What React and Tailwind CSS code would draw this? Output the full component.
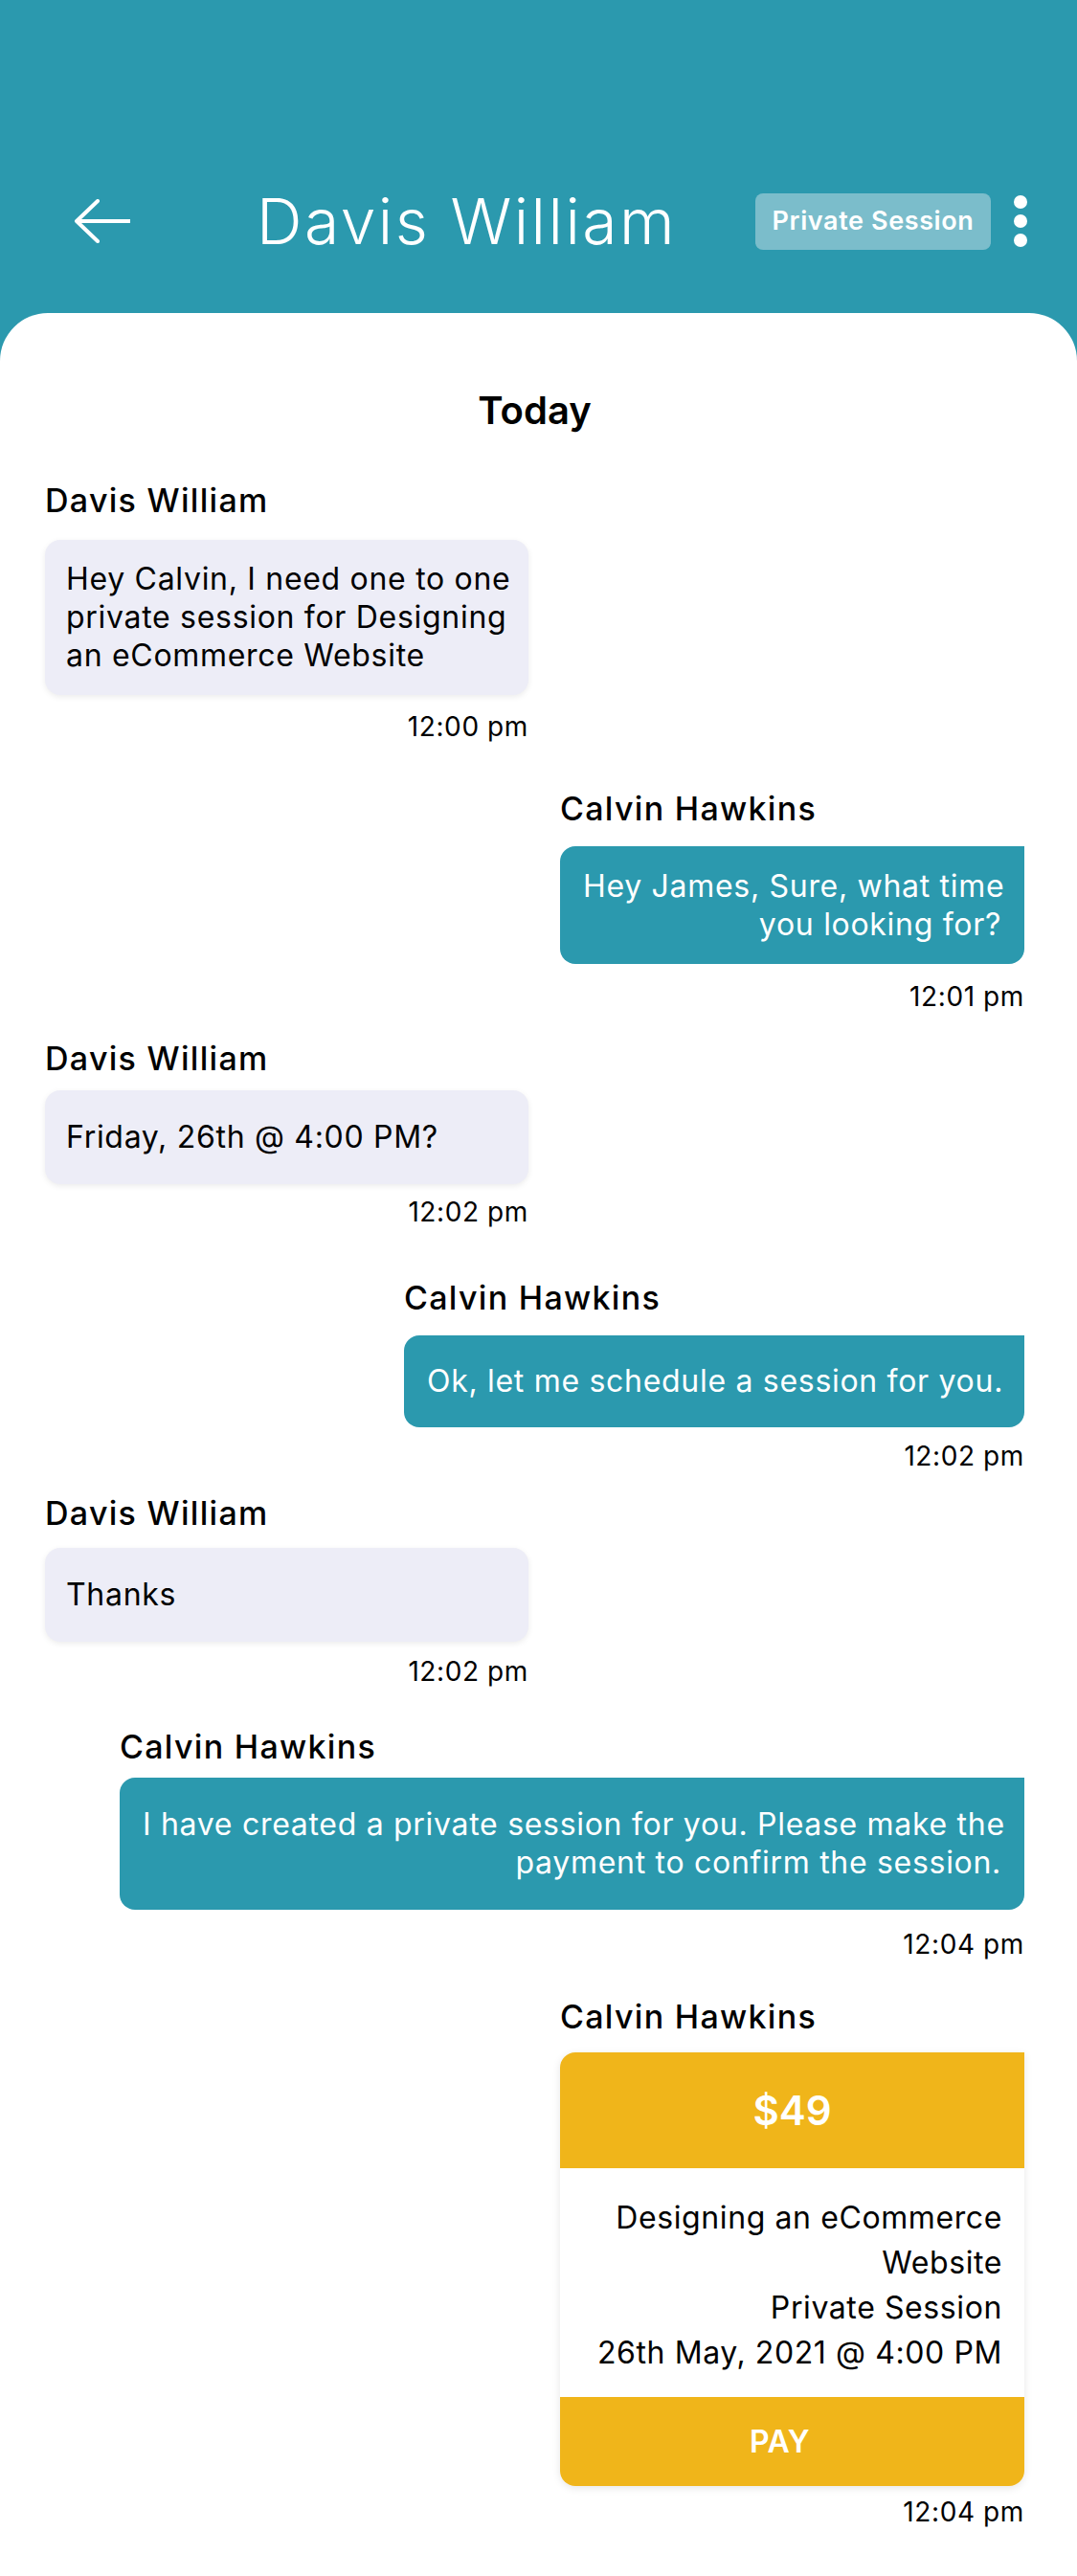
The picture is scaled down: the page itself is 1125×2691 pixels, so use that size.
import React from "react";

const messages = [
  {
    side: "left",
    name: "Davis William",
    lines: ["Hey Calvin, I need one to one", "private session for Designing", "an eCommerce Website"],
    time: "12:00 pm",
    wrap: "w-[505px] mt-[58px]",
    bubble: "h-[162px] mt-[25px]",
    ts: "mt-[19px]",
  },
  {
    side: "right",
    name: "Calvin Hawkins",
    lines: ["Hey James, Sure, what time", "you looking for?"],
    time: "12:01 pm",
    wrap: "w-[485px] mt-[56px]",
    bubble: "h-[123px] mt-[23px]",
    ts: "mt-[20px]",
  },
  {
    side: "left",
    name: "Davis William",
    lines: ["Friday, 26th @ 4:00 PM?"],
    time: "12:02 pm",
    wrap: "w-[505px] mt-[35px]",
    bubble: "h-[98px] mt-[17px]",
    ts: "mt-[15px]",
  },
  {
    side: "right",
    name: "Calvin Hawkins",
    lines: ["Ok, let me schedule a session for you."],
    time: "12:02 pm",
    wrap: "w-[648px] mt-[60px]",
    bubble: "h-[96px] mt-[23px]",
    ts: "mt-[16px]",
  },
  {
    side: "left",
    name: "Davis William",
    lines: ["Thanks"],
    time: "12:02 pm",
    wrap: "w-[505px] mt-[30px]",
    bubble: "h-[98px] mt-[20px]",
    ts: "mt-[17px]",
  },
  {
    side: "right",
    name: "Calvin Hawkins",
    lines: ["I have created a private session for you. Please make the", "payment to confirm the session."],
    time: "12:04 pm",
    wrap: "w-[945px] mt-[49px]",
    bubble: "h-[138px] mt-[16px]",
    ts: "mt-[22px]",
  },
];

function Message({ m }) {
  const left = m.side === "left";
  return (
    <div className={`flex flex-col ${m.wrap} ${left ? "self-start" : "self-end"}`}>
      <div className="text-[34px] leading-[32px] font-medium tracking-[1.3px] text-black whitespace-nowrap">{m.name}</div>
      <div
        className={`${m.bubble} flex flex-col justify-center text-[32px] leading-[40px] tracking-[0.7px] ${
          left
            ? "bg-[#EDEDF7] rounded-[16px] px-[22px] text-left text-black shadow-[0_2px_6px_rgba(0,0,0,0.08)]"
            : "bg-[#2B99AE] rounded-[16px] rounded-tr-none px-[24px] text-right text-white"
        }`}
      >
        {m.lines.map((l, i) => (
          <div key={i} className="whitespace-nowrap">
            {l}
          </div>
        ))}
      </div>
      <div className={`${m.ts} text-right text-[28px] leading-[28px] tracking-[0.6px] text-black`}>{m.time}</div>
    </div>
  );
}

export default function App() {
  return (
    <div className="min-h-screen flex flex-col bg-[#2B99AE] font-['Inter',sans-serif]">
      <header className="h-[327px] pt-[199px] pl-[77px] pr-[51px]">
        <div className="h-[64px] flex items-center">
          <svg width="59" height="46" viewBox="0 0 59 46" fill="none" className="shrink-0">
            <path d="M25 2 L3 23 L25 44 M3 23 H59" stroke="white" strokeWidth="4" strokeLinecap="round" strokeLinejoin="round" />
          </svg>
          <div className="ml-[132px] text-[66px] leading-[64px] font-light tracking-[2.5px] text-white whitespace-nowrap">Davis William</div>
          <div className="ml-auto h-[59px] w-[246px] rounded-[8px] bg-[#7BBDCB] flex items-center justify-center text-white text-[27px] tracking-[0.6px] font-semibold">
            Private Session
          </div>
          <div className="ml-[23px] flex flex-col gap-[6px] items-center w-[16px]">
            <span className="block w-[14px] h-[14px] rounded-full bg-white" />
            <span className="block w-[14px] h-[14px] rounded-full bg-white" />
            <span className="block w-[14px] h-[14px] rounded-full bg-white" />
          </div>
        </div>
      </header>
      <main className="flex-1 bg-white rounded-t-[50px] pt-[82px] pl-[47px] pr-[55px] pb-[54px] flex flex-col">
        <div className="text-center text-[40px] leading-[40px] font-semibold text-black">Today</div>
        {messages.map((m, i) => (
          <Message key={i} m={m} />
        ))}
        <div className="flex flex-col w-[485px] self-end mt-[46px]">
          <div className="text-[34px] leading-[32px] font-medium tracking-[1.3px] text-black">Calvin Hawkins</div>
          <div className="mt-[21px] rounded-[16px] rounded-tr-none overflow-hidden shadow-[0_2px_8px_rgba(0,0,0,0.10)]">
            <div className="h-[121px] bg-[#F0B51A] flex items-center justify-center text-white text-[42px] font-semibold">$49</div>
            <div className="bg-white pt-[28px] pb-[23px] pr-[23px] text-right text-[32px] leading-[47px] text-black tracking-[0.6px]">
              <div>Designing an eCommerce</div>
              <div>Website</div>
              <div>Private Session</div>
              <div>26th May, 2021 @ 4:00 PM</div>
            </div>
            <div className="h-[93px] bg-[#F0B51A] flex items-center justify-center pr-[26px] text-white text-[32px] font-semibold tracking-[0.5px]">PAY</div>
          </div>
          <div className="mt-[13px] text-right text-[28px] leading-[28px] tracking-[0.6px] text-black">12:04 pm</div>
        </div>
      </main>
    </div>
  );
}
